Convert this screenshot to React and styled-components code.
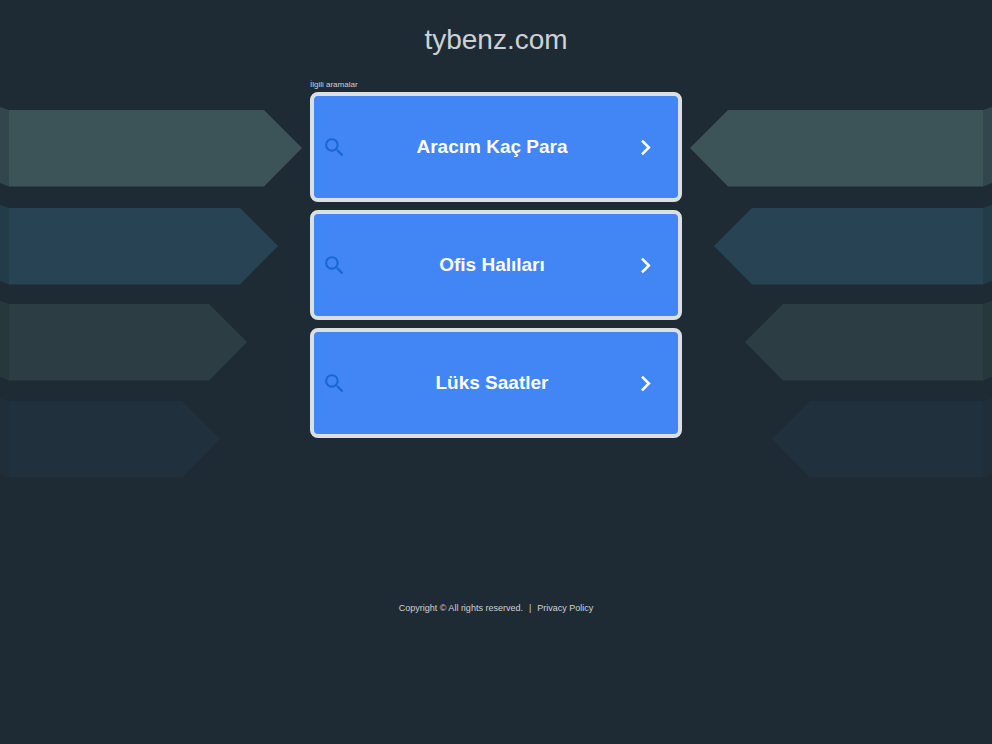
import React from "react"
import styled, { createGlobalStyle } from "styled-components"

const searches = ["Aracım Kaç Para", "Ofis Halıları", "Lüks Saatler"]

const ribbons = [
  { y: 30, shoulder: 264, fill: "#3c5357", fold: "#32474d" },
  { y: 128, shoulder: 240, fill: "#274354", fold: "#233d48" },
  { y: 224, shoulder: 209, fill: "#2c3d43", fold: "#27383d" },
  { y: 321, shoulder: 182, fill: "#20303c", fold: "#1f2e38" },
]

const Ribbons = ({ flip }) => (
  <RibbonColumn $flip={flip} aria-hidden="true">
    <RibbonArt viewBox="0 0 302 400">
      {ribbons.map(({ y, shoulder, fill, fold }) => (
        <g key={y}>
          <polygon
            fill={fold}
            points={`0,${y - 3} 9,${y} 9,${y + 76.5} 0,${y + 73}`}
          />
          <polygon
            fill={fill}
            points={`9,${y} ${shoulder},${y} ${shoulder + 38},${y +
              38} ${shoulder},${y + 76.5} 9,${y + 76.5}`}
          />
        </g>
      ))}
    </RibbonArt>
  </RibbonColumn>
)

const SearchIcon = () => (
  <Icon $size={25} $color="#1967d2" viewBox="0 0 24 24" aria-hidden="true">
    <path d="M15.5 14h-.79l-.28-.27A6.471 6.471 0 0 0 16 9.5 6.5 6.5 0 1 0 9.5 16c1.61 0 3.09-.59 4.23-1.57l.27.28v.79l5 4.99L20.49 19l-4.99-5zm-6 0C7.01 14 5 11.99 5 9.5S7.01 5 9.5 5 14 7.01 14 9.5 11.99 14 9.5 14z" />
  </Icon>
)

const ChevronIcon = () => (
  <Icon $size={31} $color="#fff" viewBox="0 0 24 24" aria-hidden="true">
    <path d="M10 6L8.59 7.41 13.17 12l-4.58 4.59L10 18l6-6z" />
  </Icon>
)

const App = () => (
  <>
    <GlobalStyle />
    <Header>
      <Title>tybenz.com</Title>
    </Header>
    <Main>
      <Ribbons />
      <section>
        <Label>İlgili aramalar</Label>
        <List>
          {searches.map(term => (
            <li key={term}>
              <Card href="#">
                <IconCell>
                  <SearchIcon />
                </IconCell>
                <Term>{term}</Term>
                <ChevronIcon />
              </Card>
            </li>
          ))}
        </List>
      </section>
      <Ribbons flip />
    </Main>
    <Footer>
      <span>Copyright © All rights reserved.</span>
      <span>|</span>
      <FooterLink href="#">Privacy Policy</FooterLink>
    </Footer>
  </>
)

export default App

const GlobalStyle = createGlobalStyle`
  * {
    box-sizing: border-box;
  }

  body {
    margin: 0;
    background-color: #1f2b34;
    color: #ced1d4;
    font-family: "Liberation Sans", Arial, sans-serif;
  }
`

const Header = styled.header`
  padding: 20px 16px;
  text-align: center;
`

const Title = styled.h1`
  margin: 0;
  font-size: 28px;
  font-weight: 400;
  line-height: 40px;
`

const Main = styled.main`
  display: grid;
  grid-template-columns: minmax(0, 1fr) minmax(0, 372px) minmax(0, 1fr);
  column-gap: 8px;
`

const RibbonColumn = styled.div`
  display: flex;
  justify-content: flex-end;
  overflow: hidden;
  transform: ${props => (props.$flip ? "scaleX(-1)" : "none")};
`

const RibbonArt = styled.svg`
  flex: none;
  width: 302px;
  height: 400px;
`

const Label = styled.h2`
  margin: 0;
  padding-bottom: 2px;
  font-size: 8px;
  font-weight: 400;
  line-height: 10px;
`

const List = styled.ul`
  display: grid;
  gap: 8px;
  margin: 0;
  padding: 0;
  list-style: none;
`

const Card = styled.a`
  display: grid;
  grid-template-columns: 40px 1fr 48px;
  align-items: center;
  min-height: 110px;
  border: 4px solid #dde0e3;
  border-radius: 8px;
  background-color: #4285f4;
  color: #fff;
  text-decoration: none;
`

const IconCell = styled.span`
  display: flex;
  justify-content: center;
`

const Icon = styled.svg`
  display: block;
  width: ${props => props.$size}px;
  height: ${props => props.$size}px;
  fill: ${props => props.$color};
`

const Term = styled.span`
  font-size: 19px;
  font-weight: 700;
  line-height: 24px;
  text-align: center;
`

const Footer = styled.footer`
  display: flex;
  justify-content: center;
  gap: 6px;
  padding: 122px 16px 32px;
  font-size: 9px;
  line-height: 12px;
`

const FooterLink = styled.a`
  color: inherit;
  text-decoration: none;
`
